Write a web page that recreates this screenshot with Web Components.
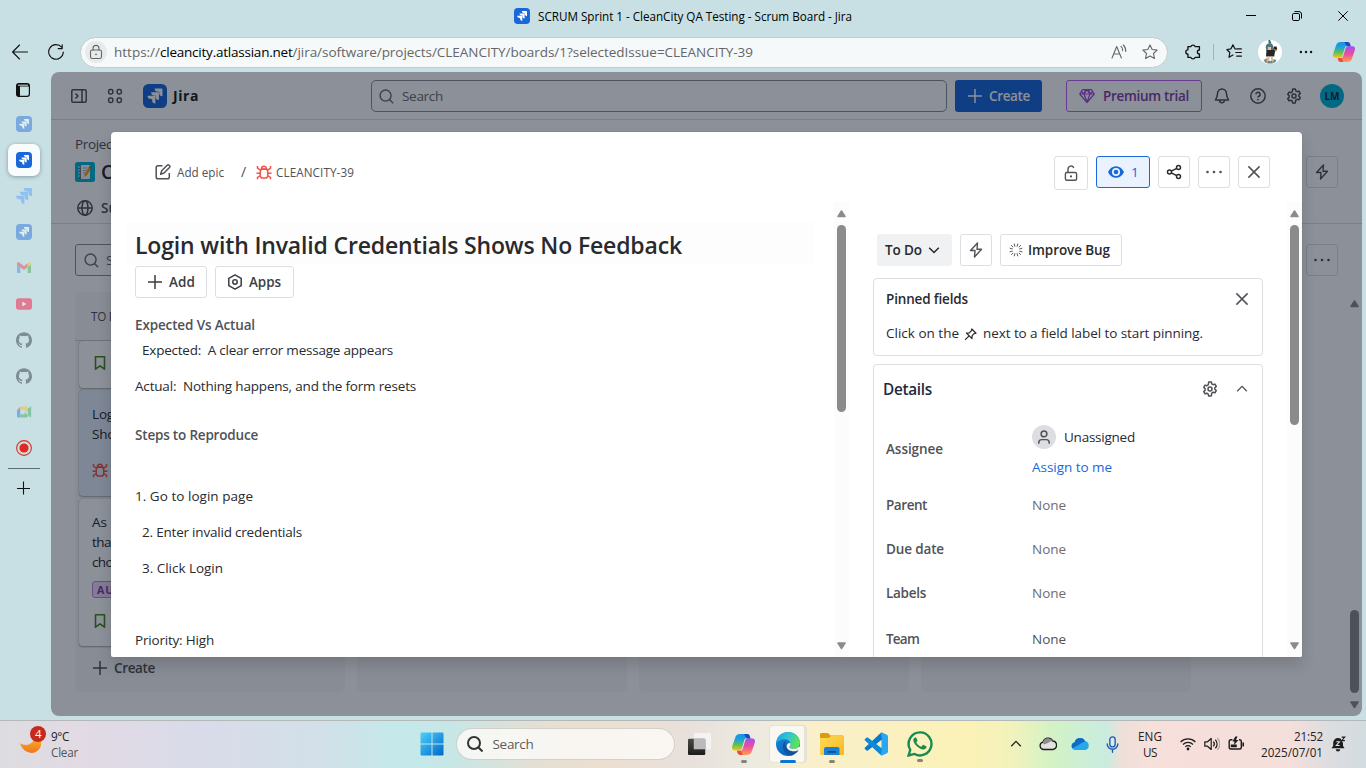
<!DOCTYPE html>
<html lang="en">
<head>
<meta charset="utf-8">
<title>SCRUM Sprint 1 - CleanCity QA Testing - Scrum Board - Jira</title>
<style>
html,body{margin:0;padding:0}
body{width:1366px;height:768px;overflow:hidden;background:#c8e0e4;font-family:"Open Sans","Noto Sans",sans-serif;color:#292a2e}
</style>
</head>
<body>
<desktop-screen></desktop-screen>
<script>
const JIRA='<path d="M11.571 11.513H0a5.218 5.218 0 0 0 5.232 5.215h2.130v2.057A5.215 5.215 0 0 0 12.575 24V12.518a1.005 1.005 0 0 0-1.005-1.005zm5.723-5.756H5.736a5.215 5.215 0 0 0 5.215 5.214h2.129v2.058a5.218 5.218 0 0 0 5.215 5.214V6.758a1.001 1.001 0 0 0-1.001-1.001zM23.013 0H11.455a5.215 5.215 0 0 0 5.215 5.215h2.129v2.057A5.215 5.215 0 0 0 24 12.483V1.005A1.001 1.001 0 0 0 23.013 0Z"';
const S='fill="none" stroke="currentColor" stroke-linejoin="round" stroke-width="1.5"';
const T='fill="none" stroke="currentColor" stroke-linejoin="round" stroke-linecap="round" stroke-width="1.1"';
const COPILOT=`<defs><linearGradient id="a" x1="0" y1="0" x2="0" y2="1"><stop offset="0" stop-color="#1b8fe8"/><stop offset=".35" stop-color="#19a6d8"/><stop offset=".65" stop-color="#5cc05a"/><stop offset="1" stop-color="#f5c70c"/></linearGradient><linearGradient id="b" x1="0" y1="0" x2="0" y2="1"><stop offset="0" stop-color="#a64ef0"/><stop offset=".5" stop-color="#ec4f9b"/><stop offset="1" stop-color="#ffa04d"/></linearGradient></defs>
<path d="M9 2h6.200c1.300 0 2.200.8 2.600 2l.6 2h-3.300c-1.300 0-2 .8-2.400 2l-2 7c-.5 1.700-1.300 2.700-3 2.700H3.500C1.300 17.700.6 16 1.100 14L4 5.500C4.700 3 6.500 2 9 2z" fill="url(#a)"/><path d="M12.500 2h3c1.500 0 2.200.8 2.600 2l.8 2.500h-3c-1.400 0-2.200-2-3.400-4.500z" fill="#1a4cc0"/>
<path d="M15 22H8.800c-1.300 0-2.200-.8-2.600-2l-.6-2h3.300c1.300 0 2-.8 2.400-2l2-7c.5-1.700 1.300-2.700 3-2.700h4.200c2.200 0 2.900 1.700 2.400 3.700L20 18.500c-.7 2.500-2.500 3.500-5 3.500z" fill="url(#b)"/><path d="M6 18h3.500c.8 1 1 2.600 1.900 4H9c-1.500 0-2.500-.8-2.800-2z" fill="#e8503a"/>`;
const GEAR=`<g ${S}><path d="M6.700 1h2.600l.45 1.900 1.350.78 1.850-.58 1.300 2.250-1.400 1.340v1.560l1.400 1.340-1.300 2.250-1.850-.58-1.350.78L9.300 15H6.700l-.45-1.960-1.350-.78-1.850.58-1.300-2.250 1.400-1.340V7.690L1.750 6.350l1.300-2.250 1.850.58 1.350-.78z"/><circle cx="8" cy="8" r="2"/></g>`;
const ICONS={
back:[16,`<path ${T} d="M7.500 1 .6 8l6.900 7M.8 8H15.500"/>`],
reload:[16,`<path ${T} d="M13.600 3.200A7.300 7.300 0 1 0 15.300 8M14.200.8v3.800h-4"/>`],
lock:[16,`<g ${T}><rect x="2.500" y="6" width="11" height="8.500" rx="1.800"/><path d="M5 6V4.400a3 3 0 0 1 6 0V6"/></g><circle cx="8" cy="10.300" r=".9" fill="currentColor"/>`],
aloud:[16,`<g ${T}><path d="M1 14 5.700 2.500 10.400 14M2.700 10h6"/><path d="M10 2.300a5 5 0 0 1 1.600 4.500M12.300 1a8 8 0 0 1 2.400 6.500"/></g>`],
star:[16,`<path ${T} d="m8 .9 2.150 4.600 5 .6-3.700 3.400 1 5L8 12l-4.450 2.500 1-5L.85 6.100l5-.6z"/>`],
puzzle:[16,`<path fill="none" stroke="currentColor" stroke-width="1.200" stroke-linejoin="round" d="M3.500 3.200h2.600a2 2 0 0 1 3.800 0h3.800v3a1.800 1.800 0 0 0 0 3.600v3H9.900a2 2 0 0 1-3.800 0H3.500V9.900a1.900 1.900 0 0 1 0-3.800z"/>`],
favs:[16,`<path fill="none" stroke="currentColor" stroke-width="1.200" stroke-linejoin="round" stroke-linecap="round" d="M10.500 5 8.900 4.800 6.900.8 5 4.800.8 5.500l3 3-.8 4.800 3.900-2.200M10.800 4.800h4.600M9.800 8.500h5.600M10.800 12.200h4.600"/>`],
dots:[16,`<g fill="currentColor"><circle cx="2.200" cy="8" r="1.350"/><circle cx="8" cy="8" r="1.350"/><circle cx="13.800" cy="8" r="1.350"/></g>`],
copilot:[24,COPILOT],
min:[10,`<path d="M0 4.500h10" stroke="currentColor"/>`],
restore:[10,`<g fill="none" stroke="currentColor"><rect x=".5" y="2.500" width="7" height="7" rx="1.300"/><path d="M2.500.6H7A2.500 2.500 0 0 1 9.500 3v4.500"/></g>`],
x:[10,`<path d="M.3.3l9.400 9.400M9.700.3.3 9.700" stroke="currentColor"/>`],
tabs:[14,`<rect x=".6" y=".6" width="12.800" height="12.800" rx="2.300" fill="none" stroke="currentColor" stroke-width="1.200"/><path d="M.6 3.200C.6 1.500 1.500.6 3 .6h8c1.500 0 2.400.9 2.400 2.400v.5H4v9.900H3C1.500 13.400.6 12.500.6 11z" fill="currentColor"/><path d="M2 2.200h10" stroke="#c8e0e4"/>`],
jirabox:[24,`<rect width="24" height="24" rx="5.500" fill="#1868db"/><g transform="translate(4.600 4.600) scale(.62)">${JIRA} fill="#fff"/></g>`],
jiraplain:[24,`${JIRA} fill="#4c9aff"/>`],
gmail:[24,`<path d="M1.500 5v14.500h5V10z" fill="#4285f4"/><path d="M17.500 10v9.500h5V5z" fill="#34a853"/><path d="M17.500 5v6l5-4V5.500c0-2-2.500-3-4-1.700z" fill="#fbbc04"/><path d="M1.500 5.500v1.700l5 3.800 5.500 4 5.500-4V4.800L12 9 5.500 4C3.500 2.700 1.500 4 1.500 5.500z" fill="#ea4335"/>`],
yt:[24,`<rect y="3.500" width="24" height="17" rx="4" fill="#ff0033"/><path d="m9.500 8.500 6 3.500-6 3.500z" fill="#fff"/>`],
gh:[24,`<path fill="#24292f" d="M12 .297c-6.630 0-12 5.373-12 12 0 5.303 3.438 9.800 8.205 11.385.6.113.82-.258.82-.577 0-.285-.01-1.040-.015-2.040-3.338.724-4.042-1.610-4.042-1.610C4.422 18.070 3.633 17.700 3.633 17.700c-1.087-.744.084-.729.084-.729 1.205.084 1.838 1.236 1.838 1.236 1.070 1.835 2.809 1.305 3.495.998.108-.776.417-1.305.76-1.605-2.665-.3-5.466-1.332-5.466-5.930 0-1.310.465-2.380 1.235-3.220-.135-.303-.54-1.523.105-3.176 0 0 1.005-.322 3.300 1.230.96-.267 1.980-.399 3-.405 1.020.006 2.040.138 3 .405 2.280-1.552 3.285-1.230 3.285-1.230.645 1.653.24 2.873.12 3.176.765.84 1.230 1.910 1.230 3.220 0 4.610-2.805 5.625-5.475 5.920.42.36.81 1.096.81 2.220 0 1.606-.015 2.896-.015 3.286 0 .315.21.69.825.57C20.565 22.092 24 17.592 24 12.297c0-6.627-5.373-12-12-12"/>`],
meet:[24,`<path d="M1.500 9v9.500c0 1 .7 1.700 1.500 1.700h3.500V9z" fill="#1a73e8"/><path d="M6.500 3.800 1.500 9h5z" fill="#ea4335"/><path d="M6.500 3.800H16c1 0 1.700.7 1.700 1.700V10L13 12V9H6.500z" fill="#fbbc04"/><path d="M6.500 20.200H16c1 0 1.700-.7 1.700-1.700V7l3.800-3c.6-.4 1.200 0 1.200.7v14.600c0 .7-.7 1-1.200.6L17.700 17 13 12v3.500H6.500z" fill="#34a853"/>`],
rec:[16,`<circle cx="8" cy="8" r="7.400" fill="none" stroke="#d93025" stroke-width="1.100"/><circle cx="8" cy="8" r="4.600" fill="#e02a20"/>`],
plusthin:[14,`<path d="M6.500 .5v13M0 7.500h13" stroke="currentColor" stroke-width="1.100"/>`],
panel:[16,`<g ${S}><rect x=".8" y="1.800" width="14.400" height="12.400" rx="1.300"/><path d="M11 2v12M4.500 5.500 7 8l-2.500 2.500"/></g>`],
apps:[16,`<g ${S}><rect x="1.600" y="1.600" width="4.300" height="4.300" rx="1.700"/><rect x="10.100" y="1.600" width="4.300" height="4.300" rx="1.700"/><rect x="1.600" y="10.100" width="4.300" height="4.300" rx="1.700"/><rect x="10.100" y="10.100" width="4.300" height="4.300" rx="1.700"/></g>`],
search:[16,`<g ${S}><circle cx="7" cy="7" r="5.900"/><path d="m11.200 11.200 3.900 3.900"/></g>`],
plus:[16,`<path ${S} d="M8 1v14M1 8h14"/>`],
gem:[16,`<path fill="none" stroke="currentColor" stroke-width="1.200" stroke-linejoin="round" d="M3.500 1.700h9L15.300 6 8 14.500.7 6zM.8 6h14.400M5 6l3 8 3-8-1.500-4.200M5 6l1.500-4.200M2.500 3.500 5 6l3-4 3 4 2.500-2.500"/>`],
bell:[16,`<g ${S}><path d="M8 1a4.500 4.500 0 0 0-4.500 4.500c0 3-1 4-2 6.500h13c-1-2.500-2-3.500-2-6.500A4.500 4.500 0 0 0 8 1zM5.500 12.200a2.500 2.500 0 0 0 5 0"/></g>`],
help:[16,`<g ${S}><circle cx="8" cy="8" r="7.200"/><path d="M5.900 6.300a2.100 2.100 0 1 1 3 1.900c-.6.300-.9.600-.9 1.300"/></g><circle cx="8" cy="11.600" r=".9" fill="currentColor"/>`],
gear:[16,GEAR],
pad:[20,`<rect width="20" height="20" rx="2.500" fill="#00b8d9"/><rect x="4" y="3" width="11" height="14" rx="1" fill="#f4f5f7"/><path d="M4 3h2v14H4z" fill="#5d6b82"/><path d="M3.300 5h2M3.300 8h2M3.300 11h2M3.300 14h2" stroke="#fff"/><path d="M8 6h4M8 8.500h3M8 11h2" stroke="#9fb0c4"/><path d="m9 15 .8-3.500L13.500 5.500l2.400 1.600-3.800 6z" fill="#f4a21c"/><path d="m13.500 5.500.8-1.300 2.400 1.600-.8 1.300z" fill="#e2483d"/>`],
globe:[16,`<g ${S}><circle cx="8" cy="8" r="7.200"/><ellipse cx="8" cy="8" rx="3" ry="7.200"/><path d="M1 8h14"/></g>`],
bookmark:[16,`<path fill="none" stroke="#4c8a1f" stroke-width="1.600" stroke-linejoin="round" d="M3.500 1.700h9v12.500L8 10.800l-4.500 3.400z"/>`],
bug:[16,`<g fill="none" stroke="#f0544a" stroke-width="1.500"><rect x="4.300" y="5" width="7.400" height="9" rx="2.600"/><path d="M5.500 4.800a2.500 2.500 0 0 1 5 0M.5 9.300h3.800M11.700 9.300h3.800M1.500 2v2.200L4.700 6.500M14.500 2v2.200l-3.200 2.300M1.500 15.300v-1.800l3-2M14.500 15.300v-1.800l-3-2M4.500 5.200h7"/></g>`],
bolt:[16,`<path fill="none" stroke="currentColor" stroke-width="1.400" stroke-linejoin="round" d="M9.500 1 2.500 8.500H7L6.500 15l7-7.800H9z"/>`],
edit:[16,`<g ${S}><path d="M7.500 1.800H3A1.800 1.800 0 0 0 1.200 3.600V13A1.800 1.800 0 0 0 3 14.800h9.500a1.800 1.800 0 0 0 1.800-1.800V9"/><path d="M12.200 1.200a1.300 1.300 0 0 1 1.900 0l.4.400a1.300 1.300 0 0 1 0 1.900L9 9l-3.400 1.200L6.700 6.700z"/></g>`],
unlock:[16,`<g fill="none" stroke="currentColor" stroke-width="1.400"><rect x="2.400" y="7.500" width="11.200" height="7.800" rx="1.500"/><path d="M5 7.500V4a3 3 0 0 1 5.800-1"/></g><circle cx="8" cy="11.400" r="1.100" fill="currentColor"/>`],
eye:[16,`<path fill="currentColor" fill-rule="evenodd" d="M8 2.200C4.500 2.200 1.600 4.500 0 8c1.600 3.500 4.500 5.800 8 5.800s6.400-2.300 8-5.800c-1.600-3.500-4.500-5.800-8-5.800zM8 4a4 4 0 1 1 0 8 4 4 0 0 1 0-8z"/><circle cx="8" cy="8" r="2.300" fill="currentColor"/>`],
share:[16,`<g ${S}><circle cx="3.500" cy="8" r="2"/><circle cx="12.500" cy="3.500" r="2"/><circle cx="12.500" cy="12.500" r="2"/><path d="m5.300 7.100 5.400-2.700M5.300 8.900l5.400 2.700"/></g>`],
dots2:[16,`<g fill="currentColor"><circle cx="1.500" cy="8" r="1.300"/><circle cx="8" cy="8" r="1.300"/><circle cx="14.500" cy="8" r="1.300"/></g>`],
close:[16,`<path ${S} d="m2.400 2.400 11.200 11.200M13.600 2.400 2.400 13.600"/>`],
hex:[16,`<g ${S}><path d="M8 .9 14.200 4.300v7.400L8 15.100l-6.200-3.400V4.300z"/><circle cx="8" cy="8" r="2.200"/></g>`],
down:[12,`<path ${S} d="m1.200 3.700 4.800 4.800 4.800-4.800"/>`],
up:[12,`<path fill="none" stroke="currentColor" stroke-width="1.300" d="m1.200 8.200 4.800-4.800 4.800 4.800"/>`],
spark:[16,`<path d="M5.900.8l.9 3.400M10.100.8l-.9 3.400M5.900 15.200l.9-3.400M10.100 15.200l-.9-3.400M.8 5.900l3.400.9M.8 10.100l3.400-.9M15.200 5.900l-3.400.9M15.200 10.100l-3.400-.9M2.500 2.500l2.300 2.300M13.500 2.500l-2.300 2.300M2.500 13.500l2.300-2.300M13.500 13.500l-2.300-2.300" stroke="currentColor" stroke-width="1.100"/>`],
pin:[16,`<path fill="none" stroke="currentColor" stroke-width="1.500" stroke-linejoin="round" d="M9.600 1.200 14.800 6.400 12.400 7 10 9.400 9.800 13 3 6.200l3.600-.2L9 3.600zM6 10 1.300 14.700"/>`],
person:[16,`<g fill="none" stroke="currentColor" stroke-width="1.700"><circle cx="8" cy="4.500" r="3.300"/><path d="M2 15.800v-1.300C2 12.300 3.700 11 5.500 11h5c1.800 0 3.500 1.300 3.500 3.500v1.300"/></g>`],
moon:[24,`<defs><linearGradient id="m" x1="0" y1="0" x2="0" y2="1"><stop offset="0" stop-color="#f9b52c"/><stop offset="1" stop-color="#f0751e"/></linearGradient></defs><path d="M15 2.500c.8 6-6.500 11-15 6.600C1.800 15.500 7 19.500 12.500 19.500 18.500 19.500 23 15 23 9.500c0-3-1-5.500-3-7z" fill="url(#m)"/>`],
win:[24,`<defs><linearGradient id="w" x1="0" y1="0" x2="1" y2="1"><stop offset="0" stop-color="#4cd0fb"/><stop offset="1" stop-color="#0067c8"/></linearGradient></defs><path fill="url(#w)" d="M.5 1.500a1 1 0 0 1 1-1h10v11H.5zM12.500.5h10a1 1 0 0 1 1 1v10h-11zM.5 12.500h11v11h-10a1 1 0 0 1-1-1zM12.500 12.500h11v10a1 1 0 0 1-1 1h-10z"/>`],
tview:[24,`<defs><linearGradient id="t" x1="0" y1="0" x2="0" y2="1"><stop offset="0" stop-color="#4a4a46"/><stop offset="1" stop-color="#1c1c1a"/></linearGradient></defs><rect x="6" y="0" width="18" height="17" rx="1.200" fill="#f4f3f3"/><rect x="0" y="6" width="18" height="17" rx="1.200" fill="url(#t)"/><path d="M6 6h12v11H6z" fill="#bcbab8"/>`],
edge:[24,`<defs><linearGradient id="e1" x1="0" y1="0" x2="1" y2=".4"><stop offset="0" stop-color="#1b9de2"/><stop offset=".5" stop-color="#2fc3d6"/><stop offset="1" stop-color="#5fe05a"/></linearGradient><linearGradient id="e2" x1="0" y1="0" x2=".7" y2="1"><stop offset="0" stop-color="#1a8fe0"/><stop offset="1" stop-color="#0c5cb5"/></linearGradient></defs><circle cx="12" cy="12" r="12" fill="url(#e2)"/><path d="M0 11.500C.5 5 5.500 0 12 0c7 0 12 5 12 10.500 0 4-3 6.500-6.500 6.500-2.500 0-4.200-.9-4.200-1.900 0-.8 1.200-1.300 1.200-3.100 0-2.600-2.400-4.800-5.700-4.800C4.500 7.200 1.500 8.800 0 11.500z" fill="url(#e1)"/><path d="M9.500 9c-1.600 1.300-2.700 3.200-2.700 5.500 0 4.500 3.700 8.500 8.700 8.900 3-.9 5.500-2.900 7-5.400-1.500.9-3 1.300-4.800 1.300-4.700 0-8.500-2.800-8.500-7 0-1.300.3-2.500.3-3.300z" fill="#12529e"/><path d="M14.500 12c0 1.800-1.200 2.300-1.200 3.100 0 1 1.700 1.900 4.200 1.900 2 0 3.900-.8 5.100-2.200l1.400.2v2.600l-1.500.4c-1.500.9-3 1.300-4.800 1.300-4 0-7-2.200-7-5 0-2 1.400-3.400 2.800-3.400.7 0 1 .5 1 1.100z" fill="#f8f6ec"/>`],
folder:[24,`<defs><linearGradient id="f" x1="0" y1="0" x2="1" y2="1"><stop offset="0" stop-color="#ffd95a"/><stop offset="1" stop-color="#f8b81c"/></linearGradient></defs><path d="M0 2.500C0 1.500.6 1 1.500 1H8l2.500 2.500H22c1.200 0 2 .7 2 1.700V10H0z" fill="#dd9b0c"/><path d="M0 6h9l2-2h11.500c.9 0 1.500.6 1.500 1.500v16c0 .9-.6 1.500-1.500 1.500h-21C.6 23 0 22.400 0 21.500z" fill="url(#f)"/><path d="M4 23v-6c0-1.200.8-2 2-2h11.500c1.200 0 2 .8 2 2v6z" fill="#1c7fd0"/><path d="M7.500 20.200c0-.8.5-1.200 1.200-1.200h6c.8 0 1.200.4 1.200 1.200v.6H7.500z" fill="#0b4f96"/>`],
vscode:[24,`<path d="M17.500.3 23 2.800c.6.300 1 .9 1 1.500v15.400c0 .6-.4 1.200-1 1.500l-5.500 2.600z" fill="#2aa6f2"/><path d="M17.500.3 1 15.500c-.5.500-.5 1.200 0 1.600l1.400 1.300c.4.400 1 .4 1.500.1L18 7.500z" fill="#0a7bc9"/><path d="M17.500 23.800 1 8.600C.5 8.100.5 7.400 1 7l1.400-1.300c.4-.4 1-.4 1.500-.1L18 16.500z" fill="#0f8ad8"/>`],
wa:[24,`<path d="M12.200 1.300A10.600 10.600 0 0 0 3 17.300L1.500 22.600l5.400-1.400A10.600 10.600 0 1 0 12.200 1.300z" fill="none" stroke="#1a8a54" stroke-width="2.200"/><path d="M8.700 6.500c-.3-.5-.6-.5-1-.5-.9 0-1.900 1-1.900 2.600 0 1.600 1.200 3.200 2.600 4.800 1.800 2 4.500 3.700 6.700 3.700 1.500 0 2.700-1 2.900-2 .1-.5.1-.9-.3-1.100l-2.300-1.100c-.4-.2-.7-.1-1 .2l-.9 1.100c-.2.3-.5.300-.9.1-1.700-.8-3-2-3.800-3.500-.2-.3-.1-.6.1-.8.5-.5.9-1.100.7-1.500z" fill="#1a8a54"/>`],
bsearch:[16,`<g fill="none" stroke="#333" stroke-width="2"><circle cx="7" cy="7" r="6"/><path d="m11 11 4.500 4.500"/></g>`],
cloudg:[18,`<path d="M4.500 14.500A3.700 3.700 0 0 1 4 7.200 5.200 5.200 0 0 1 13.700 6a4.300 4.300 0 0 1 .3 8.500z" fill="#e2e2de" stroke="#1c1c1c" stroke-width="1.300"/><path d="M4 7.200A5.200 5.200 0 0 1 13.700 6c-3 .5-4.500 2.500-9 3.500z" fill="#8d8d8d"/>`],
cloudb:[18,`<path d="M4.300 15A3.900 3.900 0 0 1 3.700 7.300 5.500 5.500 0 0 1 14 6a4.600 4.600 0 0 1 .2 9z" fill="#28a8ea"/><path d="M1.200 13.200C-.3 10.500 1.300 7.700 3.700 7.300A5.500 5.500 0 0 1 14 6l.5.2C11 7 6 11.500 1.200 13.200z" fill="#0f6cc4"/>`],
mic:[16,`<g fill="none" stroke="#1d5cb0" stroke-width="1.300" stroke-linecap="round"><rect x="5.500" y=".8" width="5" height="9.400" rx="2.500" fill="#d9e9ec"/><path d="M3 7.500a5 5 0 0 0 10 0M8 12.700v2.600"/></g>`],
wifi:[16,`<g fill="none" stroke="#1c1c1c" stroke-width="1.200"><path d="M.6 6a10.500 10.500 0 0 1 14.800 0M3 8.500a7 7 0 0 1 10 0M5.300 10.800a3.800 3.800 0 0 1 5.400 0"/></g><circle cx="8" cy="13" r="1.400" fill="#1c1c1c"/>`],
vol:[16,`<g fill="none" stroke="#1c1c1c" stroke-width="1.200" stroke-linejoin="round"><path d="M.8 5.800h2.700L7.200 2.500v11L3.500 10.200H.8z"/><path d="M9.300 5.700a3.300 3.300 0 0 1 0 4.600M11.300 3.700a6 6 0 0 1 0 8.600"/><path d="M13.300 2a8.500 8.500 0 0 1 0 12" opacity=".3"/></g>`],
bat:[16,`<g fill="none" stroke="#1c1c1c" stroke-width="1.400"><path d="M4.500 3.700H3A1.800 1.800 0 0 0 1.200 5.500v5.700A1.800 1.800 0 0 0 3 13h8.500a1.800 1.800 0 0 0 1.800-1.800V5.500a1.800 1.800 0 0 0-1.800-1.800H11"/><path d="M15.200 6.500v4" stroke-width="1.600"/></g><path d="M2.800 11.300V8.500h6v2.800zM7.300.5 4.500 5.500h2L6 9l4.500-5H8L9.500.5z" fill="#1c1c1c"/>`],
snooze:[16,`<path d="M8 2a4.800 4.800 0 0 0-4.800 4.800v3L1.500 12.300h13L13 9.800V7a3 3 0 0 1-1-2l-1.500-2.400A5 5 0 0 0 8 2zM5.800 13.200h4.400a2.200 2.200 0 0 1-4.400 0z" fill="#1c1c1c"/><path d="M6.300 5.800h3.200L6.300 9.500h3.400" fill="none" stroke="#e3dfe0" stroke-width="1.100"/><path d="M11.700 1.100h3L11.700 4.600h3.200" fill="none" stroke="#1c1c1c" stroke-width="1.100"/>`],
avatar:[24,`<circle cx="12" cy="12" r="12" fill="#fff"/><path d="M10.500 0h1.500l1.500 3.500h-3z" fill="#3f6a70"/><path d="M8 5.500c.5-2.500 5.500-3.500 6.800-.5.900 2 .8 4.500-.3 6.500H9c-1.200-2-1.500-4-1-6z" fill="#4d7478"/><path d="M9.800 7h3.200v3.200H9.800z" fill="#e2bda0"/><path d="M8 16.500 8.500 10h6.500l1-3.500h2.500l.8 2.500-2.300 2.500-.8 5z" fill="#25262b"/><path d="m15.500 9 3.500 1-1 2z" fill="#c9a84d"/><path d="M9.500 16.500h2v4.500h-2zM13 16.500h1.800V21H13z" fill="#d9b59c"/><path d="M5.500 19.500h3l.5 3.500-2-.5zM15.500 19l3 1-1.500 2.500-2 .5zM9.300 21h5.500v2.500H9.300z" fill="#6d8a80"/><path d="M7.500 18.500h2v2h-2z" fill="#d06a3c"/>`]
};
class UiIcon extends HTMLElement{
 connectedCallback(){
  if(this.shadowRoot)return;
  const [vb,body]=ICONS[this.getAttribute('name')],s=this.getAttribute('size')||16;
  this.attachShadow({mode:'open'}).innerHTML=`<style>:host{display:block;flex:none;width:${s}px;height:${s}px}svg{display:block}</style><svg width="${s}" height="${s}" viewBox="0 0 ${vb} ${vb}">${body}</svg>`;
 }
}
customElements.define('ui-icon',UiIcon);

/* One line of text: the tracking is adjusted so that the line is exactly w pixels wide. */
class UiText extends HTMLElement{
 connectedCallback(){
  if(this.shadowRoot)return;
  const g=(n,d)=>this.getAttribute(n)||d,w=+g('w',0);
  this.attachShadow({mode:'open'}).innerHTML=`<style>:host{display:block;flex:none;white-space:pre;line-height:20px;height:20px;${w?`width:${w}px;`:''}font-size:${g('s',13.5)}px;font-weight:${g('b',400)}}span{display:inline-block}</style><span><slot></slot></span>`;
  if(w){
   const sp=this.shadowRoot.querySelector('span'),n=[...this.textContent].length;
   sp.style.letterSpacing=((w-sp.getBoundingClientRect().width)/n).toFixed(3)+'px';
  }
 }
}
customElements.define('ui-text',UiText);

function define(name,css,html){
 const t=document.createElement('template');
 t.innerHTML=`<style>:host{display:block;box-sizing:border-box}.r{display:flex;align-items:center}*{box-sizing:border-box}${css}</style>${html}`;
 customElements.define(name,class extends HTMLElement{
  constructor(){super();this.attachShadow({mode:'open'}).append(t.content.cloneNode(true))}
 });
}

define('scroll-bar',`:host{width:15px;display:flex;flex-direction:column;align-items:center;background:var(--track,#fcfcfc);color:#8b8b8b}
 svg{display:block;flex:none}.thumb{width:9px;margin-top:var(--off,7px);height:var(--len);border-radius:5px;background:currentColor}`,
`<svg style="margin-top:7px" width="9" height="9"><path d="M4.500 2 8 7.500H1z" fill="currentColor" stroke="currentColor" stroke-width="1.500" stroke-linejoin="round"/></svg><div class="thumb"></div><svg style="margin-top:auto;margin-bottom:7px" width="9" height="9"><path d="M4.500 7.500 8 2H1z" fill="currentColor" stroke="currentColor" stroke-width="1.500" stroke-linejoin="round"/></svg>`);

define('jira-button',`:host{display:flex;align-items:center;justify-content:center;flex:none;height:32px;min-width:32px;border:1px solid #dddee1;border-radius:3px;color:#505258}`,`<slot></slot>`);

define('window-titlebar',`:host{display:flex;align-items:center;height:36px;padding:0 18px 4px 514px;color:#000}`,
`<ui-icon name="jirabox"></ui-icon><ui-text w="314" s="11.700" style="margin-left:8px">SCRUM Sprint 1 - CleanCity QA Testing - Scrum Board - Jira</ui-text>
<ui-icon name="min" size="10" style="margin-left:auto"></ui-icon><ui-icon name="restore" size="10" style="margin-left:36px"></ui-icon><ui-icon name="x" size="10" style="margin-left:36px"></ui-icon>`);

define('browser-toolbar',`:host{display:flex;align-items:center;height:32px;padding-left:12px;color:#111}
.bar{margin-left:16px;width:1088px;height:31px;border-radius:16px;background:#f5f9fa;border:1px solid #c6cbcc;padding:0 9px 0 4px;color:#666}
.lk{width:22px;height:22px;border-radius:50%;background:#e7ebec;display:grid;place-items:center;margin-right:7px}
.div{width:1px;height:16px;background:#a3b3b6;margin:0 12px}`,
`<ui-icon name="back"></ui-icon><ui-icon name="reload" style="margin-left:20px"></ui-icon>
<div class="bar r"><div class="lk"><ui-icon name="lock"></ui-icon></div><ui-text w="46">https://</ui-text><ui-text w="132.500" style="color:#000">cleancity.atlassian.net</ui-text><ui-text w="460.500">/jira/software/projects/CLEANCITY/boards/1?selectedIssue=CLEANCITY-39</ui-text>
<ui-icon name="aloud" style="margin-left:auto"></ui-icon><ui-icon name="star" style="margin-left:15px"></ui-icon></div>
<ui-icon name="puzzle" size="18" style="margin-left:16px"></ui-icon><div class="div" style="margin-left:11px"></div><ui-icon name="favs"></ui-icon><ui-icon name="avatar" size="24" style="margin-left:16px"></ui-icon><ui-icon name="dots" size="14" style="margin-left:17px"></ui-icon><ui-icon name="copilot" size="24" style="margin-left:19px"></ui-icon>`);

define('tab-sidebar',`:host{width:51px;padding-right:3px;color:#111}
.t{height:36px;display:grid;place-items:center}.f ui-icon{opacity:.45}
.on{width:32px;height:32px;margin:2px 8px;border-radius:7px;background:#f9fcfc;box-shadow:0 1px 4px rgba(0,30,40,.35)}
.ln{width:32px;height:1px;background:#5f6c70;margin:2px auto 0 8px}`,
`<div class="t"><ui-icon name="tabs" size="14" style="margin-left:-2px"></ui-icon></div>
<div class="t f" style="margin-top:-2px"><ui-icon name="jirabox"></ui-icon></div>
<div class="t on"><ui-icon name="jirabox"></ui-icon></div>
<div class="t f"><ui-icon name="jiraplain"></ui-icon></div><div class="t f"><ui-icon name="jirabox"></ui-icon></div>
<div class="t f"><ui-icon name="gmail"></ui-icon></div><div class="t f"><ui-icon name="yt"></ui-icon></div>
<div class="t f"><ui-icon name="gh"></ui-icon></div><div class="t f"><ui-icon name="gh"></ui-icon></div>
<div class="t f"><ui-icon name="meet"></ui-icon></div><div class="t"><ui-icon name="rec"></ui-icon></div>
<div class="ln"></div><div class="t" style="margin-top:1px"><ui-icon name="plusthin" size="14"></ui-icon></div>`);

define('jira-nav',`:host{display:flex;align-items:center;height:48px;border-bottom:1px solid #dddee1;padding:1px 18px 0 20px;color:#505258}
.s{margin-left:172px;width:576px;height:32px;border:1px solid #8c8f97;border-radius:5px;padding-left:7px;color:#6b6e76}
.c{margin-left:8px;width:87px;height:32px;border-radius:3px;background:#1868db;color:#fff;padding-left:12px}
.p{margin-left:24px;width:136px;height:32px;border-radius:3px;border:1px solid #bf63f3;color:#803fa5;padding-left:12px}
.av{margin-left:18px;width:24px;height:24px;border-radius:50%;background:#00b8d9;color:#172b4d;display:grid;place-items:center}`,
`<ui-icon name="panel"></ui-icon><ui-icon name="apps" style="margin-left:20px"></ui-icon><ui-icon name="jirabox" size="24" style="margin-left:20px"></ui-icon><ui-text w="26" s="14" b="700" style="margin-left:6px;color:#1e1f21">Jira</ui-text>
<div class="s r"><ui-icon name="search" size="15"></ui-icon><ui-text w="41" style="margin-left:8px">Search</ui-text></div>
<div class="c r"><ui-icon name="plus"></ui-icon><ui-text w="41" b="600" style="margin-left:6px">Create</ui-text></div>
<div class="p r"><ui-icon name="gem" style="color:#a64fe0"></ui-icon><ui-text w="86" b="600" style="margin-left:8px">Premium trial</ui-text></div>
<ui-icon name="bell" style="margin-left:12px"></ui-icon><ui-icon name="help" style="margin-left:20px"></ui-icon><ui-icon name="gear" style="margin-left:20px"></ui-icon>
<div class="av"><ui-text w="15" s="10" b="700">LM</ui-text></div>`);

define('board-card',`:host{margin:0 4px;width:262px;padding:0 13px;border-radius:4px;background:#fff;box-shadow:0 1px 2px rgba(30,31,33,.35),0 0 1px rgba(30,31,33,.35)}`,`<slot></slot>`);

define('board-page',`:host{display:flex;flex-direction:column;height:596px}
.h{height:104px;border-bottom:1px solid #dddee1;padding:14px 24px 0;color:#505258}
.row{display:flex;align-items:center;justify-content:space-between}
.body{flex:1;display:flex;justify-content:space-between;min-height:0}
.main{padding:20px 0 0 24px}
.sf{width:200px;height:32px;border:1px solid #8c8f97;border-radius:3px;padding-left:8px;color:#6b6e76}
.cols{display:grid;grid-template-columns:repeat(4,270px);gap:12px;margin-top:16px}
.col{height:400px;background:#f8f8f8;border-radius:6px;overflow:hidden}
.ch{height:49px;border-bottom:1px solid #d0d2d6;padding:14px 16px}
.side{display:flex;flex-direction:column;align-items:flex-end}
.side jira-button{margin:20px 24px 0 0}
scroll-bar{--track:transparent;--off:302px;--len:83px;height:424px;margin-top:16px}
.ep{margin-top:9px;width:40px;height:17px;border:1px solid #b88fd8;border-radius:3px;background:#eed7fc;color:#803fa5;padding-left:4px}`,
`<div class="h"><ui-text w="37">Projec</ui-text>
<div class="row" style="margin-top:2px;height:32px"><div class="r"><ui-icon name="pad" size="20"></ui-icon><ui-text w="14" s="19.500" b="600" style="margin-left:6px;color:#292a2e">C</ui-text></div><jira-button><ui-icon name="bolt"></ui-icon></jira-button></div>
<div class="r" style="margin-top:10px;padding-left:2px"><ui-icon name="globe"></ui-icon><ui-text b="600" w="16" style="margin-left:8px">Su</ui-text></div></div>
<div class="body"><div class="main"><div class="sf r"><ui-icon name="search" size="15"></ui-icon><ui-text w="8" style="margin-left:7px">S</ui-text></div>
<div class="cols"><div class="col"><div class="ch"><ui-text s="11.700" w="26" style="color:#505258">TO D</ui-text></div>
<board-card style="height:47px;padding-top:14px"><ui-icon name="bookmark"></ui-icon></board-card>
<board-card style="height:106px;margin-top:2px;padding-top:14px;background:#e6effc"><ui-text w="22">Log</ui-text><ui-text w="23">Sho</ui-text><ui-icon name="bug" style="margin-top:18px"></ui-icon></board-card>
<board-card style="height:147px;margin-top:3px;padding-top:13px"><ui-text w="15">As</ui-text><ui-text w="19">tha</ui-text><ui-text w="21">cho</ui-text><div class="ep r"><ui-text s="10.700" b="700" w="17">AU</ui-text></div><ui-icon name="bookmark" style="margin-top:15px"></ui-icon></board-card>
<div class="r" style="padding:12px 0 0 17px;color:#505258"><ui-icon name="plus"></ui-icon><ui-text w="41" b="600" style="margin-left:6px">Create</ui-text></div></div>
<div class="col"></div><div class="col"></div><div class="col"></div></div></div>
<div class="side"><jira-button><ui-icon name="dots2"></ui-icon></jira-button><scroll-bar></scroll-bar></div></div>`);

define('detail-field',`:host{display:grid;grid-template-columns:146px 1fr;align-items:center;height:44px;padding-left:12px;color:#6b6e76}::slotted([slot=label]){color:#505258}`,`<slot name="label"></slot><slot></slot>`);

define('issue-details',`:host{width:438px;overflow:hidden}
.ctl{margin:32px 0 0 28px;display:flex;gap:8px}
.st{width:75px;height:32px;background:#f0f1f2;border-radius:3px;padding-left:8px}
.box{margin:12px 0 0 24px;width:390px;border:1px solid #dddee1;border-radius:4px}
.pin{height:78px;padding:10px 12px 0 12px}
.av{width:24px;height:24px;border-radius:50%;background:#dddee1;display:grid;place-items:center;color:#505258}`,
`<div class="ctl"><div class="st r"><ui-text w="37" b="600">To Do</ui-text><ui-icon name="down" size="12" style="margin-left:6px"></ui-icon></div>
<jira-button><ui-icon name="bolt"></ui-icon></jira-button>
<jira-button style="width:122px;justify-content:flex-start;padding-left:8px"><ui-icon name="spark" size="14"></ui-icon><ui-text w="82" b="600" style="margin-left:5px;color:#292a2e">Improve Bug</ui-text></jira-button></div>
<div class="box pin"><div class="r" style="justify-content:space-between"><ui-text w="82" b="600">Pinned fields</ui-text><ui-icon name="close" style="color:#505258"></ui-icon></div>
<div class="r" style="margin-top:14px"><ui-text w="73">Click on the</ui-text><ui-icon name="pin" size="13" style="margin:3px 6px 0 5px"></ui-icon><ui-text w="220">next to a field label to start pinning.</ui-text></div></div>
<div class="box" style="margin-top:8px;height:310px"><div class="r" style="height:48px;padding:0 14px 0 9px"><ui-text w="49" s="15.300" b="600" style="color:#1e2a3f">Details</ui-text><ui-icon name="gear" style="margin-left:auto;color:#505258"></ui-icon><ui-icon name="up" size="12" style="margin-left:18px;color:#505258"></ui-icon></div>
<detail-field style="height:72px"><ui-text slot="label" w="57" b="600">Assignee</ui-text><div style="padding-top:4px"><div class="r"><div class="av"><ui-icon name="person" size="14"></ui-icon></div><ui-text w="71" style="margin-left:8px;color:#292a2e">Unassigned</ui-text></div><ui-text w="80" style="margin-top:8px;color:#1868db">Assign to me</ui-text></div></detail-field>
<detail-field style="height:40px"><ui-text slot="label" w="41" b="600">Parent</ui-text><ui-text w="34">None</ui-text></detail-field>
<detail-field style="margin-top:2px"><ui-text slot="label" w="58" b="600">Due date</ui-text><ui-text w="34">None</ui-text></detail-field>
<detail-field><ui-text slot="label" w="40" b="600">Labels</ui-text><ui-text w="34">None</ui-text></detail-field>
<detail-field style="margin-top:2px"><ui-text slot="label" w="33" b="600">Team</ui-text><ui-text w="34" style="color:#505258">None</ui-text></detail-field></div>`);

define('issue-content',`:host{width:723px;padding-left:24px}
.ti{margin:20px 0 0 -8px;width:687px;height:43px;padding-left:8px;background:#fdfdfd}
.g{color:#505258}`,
`<div class="ti r"><ui-text s="23" w="547" b="600" style="line-height:30px;height:30px;margin-top:2px">Login with Invalid Credentials Shows No Feedback</ui-text></div>
<div class="r" style="gap:8px;margin-top:1px"><jira-button style="width:72px;color:#3b3d42"><ui-icon name="plus"></ui-icon><ui-text w="26" b="600" style="margin-left:6px">Add</ui-text></jira-button><jira-button style="width:79px;color:#3b3d42;justify-content:flex-start;padding-left:11px"><ui-icon name="hex"></ui-icon><ui-text w="32" b="600" style="margin-left:6px">Apps</ui-text></jira-button></div>
<ui-text class="g" b="600" w="120" style="margin-top:17px">Expected Vs Actual</ui-text>
<ui-text w="251" style="margin:5px 0 0 7px">Expected:  A clear error message appears</ui-text>
<ui-text w="281" style="margin-top:16px">Actual:  Nothing happens, and the form resets</ui-text>
<ui-text class="g" b="600" w="123" style="margin-top:29px">Steps to Reproduce</ui-text>
<ui-text w="118" style="margin-top:41px">1. Go to login page</ui-text>
<ui-text w="160" style="margin:16px 0 0 7px">2. Enter invalid credentials</ui-text>
<ui-text w="81" style="margin:16px 0 0 7px">3. Click Login</ui-text>
<ui-text w="79" style="margin-top:52px">Priority: High</ui-text>`);

define('issue-dialog',`:host{position:absolute;left:60px;top:60px;width:1191px;height:525px;border-radius:4px 4px 2px 2px;background:#fff;overflow:hidden;display:flex;flex-direction:column}
.h{height:70px;padding:0 32px 0 44px;color:#505258;display:flex;flex:none}
.bc{height:80px}.bt{margin-left:auto;padding-top:24px;display:flex;gap:8px;align-items:flex-start}
.b{display:flex;flex:1;min-height:0}`,
`<div class="h"><div class="r bc"><ui-icon name="edit"></ui-icon><ui-text w="47" s="11.700" style="margin-left:6px">Add epic</ui-text><ui-text w="5" s="14" style="margin-left:17px">/</ui-text><ui-icon name="bug" style="margin-left:10px"></ui-icon><ui-text w="78" s="11.700" style="margin-left:4px">CLEANCITY-39</ui-text></div>
<div class="bt"><jira-button style="width:34px;height:34px"><ui-icon name="unlock"></ui-icon></jira-button><jira-button style="width:54px;border-color:#1868db;background:#e9f2fe;color:#1868db"><ui-icon name="eye"></ui-icon><ui-text w="7" style="margin-left:7px">1</ui-text></jira-button><jira-button style="color:#292a2e"><ui-icon name="share"></ui-icon></jira-button><jira-button><ui-icon name="dots2"></ui-icon></jira-button><jira-button><ui-icon name="close"></ui-icon></jira-button></div></div>
<div class="b"><issue-content></issue-content><scroll-bar style="--len:187px"></scroll-bar><issue-details></issue-details><scroll-bar style="--len:200px"></scroll-bar></div>`);

define('jira-app',`:host{position:relative;width:1311px;height:644px;border-radius:8px;background:#fff;overflow:hidden}
.blanket{position:absolute;inset:0;background:rgba(5,12,31,.46)}
.shadow{position:absolute;left:60px;top:60px;width:1191px;height:525px;border-radius:4px;box-shadow:0 8px 14px rgba(30,31,33,.17),0 0 1px rgba(30,31,33,.31)}`,
`<jira-nav></jira-nav><board-page></board-page><div class="blanket"></div><div class="shadow"></div><issue-dialog></issue-dialog>`);

define('task-bar',`:host{display:flex;align-items:center;height:48px;border-top:1px solid #b3b8b8;color:#222;padding:0 20px 1px 0;background:linear-gradient(90deg,#dddde0 0,#e2dae4 80px,#d9dbe9 200px,#d2e0e8 320px,#c4e9ea 400px,#c6e7e6 450px,#e3dfd6 530px,#ebdfcf 600px,#e8e0dc 690px,#edebe0 760px,#f9efcb 810px,#fbf2b6 970px,#f3f2bc 1010px,#d2f2c6 1055px,#c9ece0 1105px,#eedfd8 1122px,#f7dfda 1150px,#f5dfdb 1290px,#dcdde0 1330px,#d2dce0)}
.we{position:relative;width:31px;margin-left:20px}.bg{position:absolute;left:10px;top:-6px;width:16px;height:16px;border-radius:50%;background:#c42b1c;color:#fff;display:grid;place-items:center}
.bg ui-text{height:16px;line-height:16px}
.s{margin-left:12px;width:219px;height:32px;border-radius:16px;background:rgba(252,250,247,.85);border:1px solid rgba(120,120,110,.3);padding-left:10px}
.app{position:relative;width:24px;margin-left:20px}
.app i{position:absolute;left:9px;top:28px;width:6px;height:3px;border-radius:2px;background:#86837a}
.on{position:absolute;left:-7px;top:-7px;width:38px;height:38px;border-radius:4px;background:rgba(250,250,246,.8);border:1px solid rgba(220,215,200,.7);box-shadow:-3px 0 0 -1px rgba(210,205,190,.5) inset}
.app i.w{left:4px;width:16px;background:#0d74cf}.app ui-icon{position:relative}
.c{display:flex;flex-direction:column;align-items:center}.c ui-text{height:16px;line-height:16px}`,
`<div class="we"><ui-icon name="moon" size="22" style="margin-top:3px"></ui-icon><div class="bg"><ui-text s="11.500" w="6">4</ui-text></div></div>
<div class="c" style="align-items:flex-start;margin-top:-1px"><ui-text s="11.700" w="18">9°C</ui-text><ui-text s="11.700" w="27" style="color:#555">Clear</ui-text></div>
<ui-icon name="win" size="24" style="margin-left:341.500px"></ui-icon>
<div class="s r"><ui-icon name="bsearch"></ui-icon><ui-text w="41" style="margin-left:10px;color:#5c5c5c">Search</ui-text></div>
<div class="app" style="margin-left:13px"><ui-icon name="tview" size="23"></ui-icon></div>
<div class="app"><ui-icon name="copilot" size="25" style="margin-left:-1px"></ui-icon><i></i></div>
<div class="app"><div class="on"></div><ui-icon name="edge" size="24"></ui-icon><i class="w"></i></div>
<div class="app"><ui-icon name="folder" size="24"></ui-icon><i></i></div>
<div class="app"><ui-icon name="vscode" size="24"></ui-icon></div>
<div class="app"><ui-icon name="wa" size="26" style="margin-left:-1px"></ui-icon><i></i></div>
<ui-icon name="up" size="12" style="margin-left:auto"></ui-icon><ui-icon name="cloudg" size="18" style="margin-left:17px"></ui-icon><ui-icon name="cloudb" size="18" style="margin-left:14px"></ui-icon><ui-icon name="mic" size="17" style="margin-left:15px"></ui-icon>
<div class="c" style="margin-left:17px"><ui-text s="11.700" w="24">ENG</ui-text><ui-text s="11.700" w="14">US</ui-text></div>
<ui-icon name="wifi" style="margin-left:18px"></ui-icon><ui-icon name="vol" style="margin-left:8px"></ui-icon><ui-icon name="bat" style="margin-left:8px"></ui-icon>
<div class="c" style="margin-left:17px;align-items:flex-end"><ui-text s="11.700" w="29">21:52</ui-text><ui-text s="11.700" w="62">2025/07/01</ui-text></div>
<ui-icon name="snooze" style="margin-left:7px"></ui-icon>`);

define('desktop-screen',`:host{width:1366px;height:768px;display:grid;grid-template-rows:36px 36px 648px 48px;overflow:hidden;position:relative}
.m{display:flex}`,
`<window-titlebar></window-titlebar><browser-toolbar></browser-toolbar><div class="m"><tab-sidebar></tab-sidebar><jira-app></jira-app></div><task-bar></task-bar>`);
</script>
</body>
</html>
